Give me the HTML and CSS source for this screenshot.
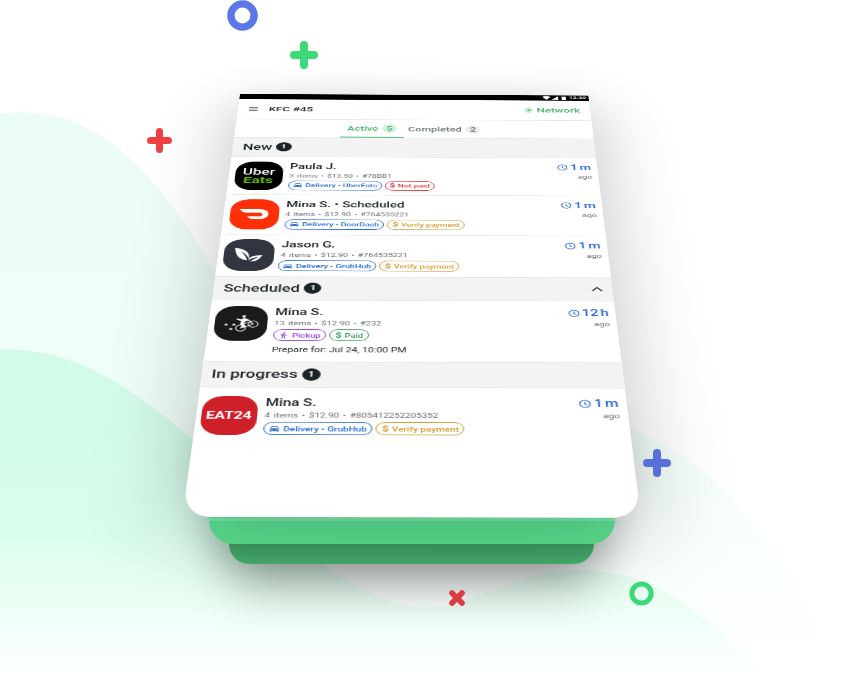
FILE: index.html
```html
<!DOCTYPE html>
<html lang="en">
<head>
<meta charset="utf-8">
<title>Orders</title>
<link rel="stylesheet" href="styles.css">
</head>
<body>
<svg class="defs" width="0" height="0" aria-hidden="true">
  <symbol id="car" viewBox="0 0 24 24"><path fill-rule="evenodd" d="M18.900 6c-.2-.6-.8-1-1.400-1h-11c-.7 0-1.200.4-1.400 1L3 12v8c0 .6.500 1 1 1h1c.6 0 1-.4 1-1v-1h12v1c0 .6.500 1 1 1h1c.6 0 1-.4 1-1v-8l-2.100-6zM6.500 16a1.500 1.500 0 1 1 0-3 1.500 1.500 0 0 1 0 3zm11 0a1.500 1.500 0 1 1 0-3 1.500 1.500 0 0 1 0 3zM5 11l1.500-4.500h11L19 11H5z"/></symbol>
  <symbol id="walk" viewBox="0 0 24 24"><path d="M13.500 5.500c1.100 0 2-.9 2-2s-.9-2-2-2-2 .9-2 2 .9 2 2 2zM9.800 8.900L7 23h2.100l1.800-8 2.100 2v6h2v-7.500l-2.100-2 .6-3C14.800 12 16.800 13 19 13v-2c-1.900 0-3.500-1-4.300-2.400l-1-1.600c-.4-.6-1-1-1.700-1-.3 0-.5.100-.8.100L6 8.300V13h2V9.600l1.800-.7"/></symbol>
  <symbol id="clock" viewBox="0 0 24 24"><g fill="none" stroke="currentColor" stroke-width="2.300"><circle cx="12" cy="12" r="10.500"/><path d="M12 6V13l5 2.500"/></g></symbol>
</svg>
<main class="scene">
  <svg class="backdrop" viewBox="0 0 842 680">
    <defs>
      <linearGradient id="w1" x1="0" y1="110" x2="0" y2="680" gradientUnits="userSpaceOnUse"><stop offset="0" stop-color="#ecfdf5"/><stop offset=".6" stop-color="#f1fef9"/><stop offset="1" stop-color="#fff"/></linearGradient>
      <linearGradient id="fade" x1="560" y1="0" x2="760" y2="0" gradientUnits="userSpaceOnUse"><stop offset="0" stop-color="#fff" stop-opacity="0"/><stop offset="1" stop-color="#fff" stop-opacity=".4"/></linearGradient>
      <linearGradient id="w2" x1="0" y1="349" x2="0" y2="680" gradientUnits="userSpaceOnUse"><stop offset="0" stop-color="#d1fbe8"/><stop offset=".55" stop-color="#dafdec"/><stop offset=".88" stop-color="#f6fffa"/><stop offset="1" stop-color="#fff"/></linearGradient>
    </defs>
    <path fill="url(#w1)" d="M0 113.500Q10 112.500 20 112.500C92 112 148 158 213 268C270 370 320 480 420 490C500 480 540 400 630 428C725 467 785 550 842 680H0Z"/>
    <path fill="url(#fade)" d="M560 380H842V680H560Z"/>
    <path fill="url(#w2)" d="M0 349H5C80 350 135 390 193 440C240 482 280 525 325 565C360 592 395 607 425 607C480 607 510 570 580 570C650 570 705 610 768 680H0Z"/>
  </svg>

  <div class="sheet sheet-back"></div>
  <div class="sheet sheet-front"></div>

  <section class="phone">
    <div class="statusbar">
      <svg width="32" height="9" viewBox="0 0 32 9" fill="#fff"><path d="M0 2Q5-1 10 2L5 8.500ZM19 1V8H11ZM23 1.500h5V8.500H23z"/></svg>
      <span>12:30</span>
    </div>
    <header class="appbar">
      <svg class="menu" width="10" height="9" viewBox="0 0 10 9"><path d="M0 1h10M0 4.500h10M0 8h10" stroke="#50575a" stroke-width="1.400"/></svg>
      <h1>KFC #45</h1>
      <div class="network"><svg width="10" height="13" viewBox="0 0 11 13"><ellipse cx="5.500" cy="6.500" rx="5.500" ry="6.500" fill="#cdeeda"/><circle cx="5.500" cy="6.500" r="2" fill="#3fb56d"/></svg>Network</div>
    </header>
    <nav class="tabs">
      <div class="tab active">Active<span class="count">5</span></div>
      <div class="tab">Completed<span class="count">2</span></div>
    </nav>

    <h2 class="group g-new">New<span class="badge">1</span></h2>
    <div class="list l-new">
      <article class="order">
        <div class="logo uber"><b>Uber</b><b class="lime">Eats</b></div>
        <div class="info">
          <h3>Paula J.</h3>
          <p class="meta">3 items • $13.50 • #78BB1</p>
          <div class="pills"><span class="pill blue"><svg><use href="#car"/></svg>Delivery • UberEats</span><span class="pill red"><i>$</i>Not paid</span></div>
        </div>
        <div class="time"><div><svg><use href="#clock"/></svg>1 m</div><small>ago</small></div>
      </article>
      <article class="order">
        <div class="logo dash"><svg width="34" height="20" viewBox="0 0 36 22"><path fill="#fff" d="M0 1H24C31 1 35 5 35 11S30 21 24 21H17C15 21 13 19.500 11.500 17.500L10 15H24C26.500 15 28 13.500 28 11.500S26.500 8 24 8H9C6 8 4 6.500 2.500 4.500Z"/></svg></div>
        <div class="info">
          <h3>Mina S. • Scheduled</h3>
          <p class="meta">4 items • $12.90 • #764535221</p>
          <div class="pills"><span class="pill blue"><svg><use href="#car"/></svg>Delivery • DoorDash</span><span class="pill amber"><i>$</i>Verify payment</span></div>
        </div>
        <div class="time"><div><svg><use href="#clock"/></svg>1 m</div><small>ago</small></div>
      </article>
      <article class="order">
        <div class="logo grub"><svg width="32" height="26" viewBox="0 0 34 28"><path fill="#fff" d="M1 1C12 3 19 9 18 22C17 17 13 11 8 8C12 13 15 18 16 24C6 23 2 13 1 1ZM17.500 24C18 17 23 15 33 14C30 22 26 27 19 26C22 24 26 20 28 17.500C23 19 20 21 17.500 24Z"/></svg></div>
        <div class="info">
          <h3>Jason G.</h3>
          <p class="meta">4 items • $12.90 • #764535221</p>
          <div class="pills"><span class="pill blue"><svg><use href="#car"/></svg>Delivery • GrubHub</span><span class="pill amber"><i>$</i>Verify payment</span></div>
        </div>
        <div class="time"><div><svg><use href="#clock"/></svg>1 m</div><small>ago</small></div>
      </article>
    </div>

    <h2 class="group g-sched">Scheduled<span class="badge">1</span><svg class="chevron" width="12" height="8" viewBox="0 0 12 8"><path d="M1 7L6 1.500L11 7" fill="none" stroke="#222" stroke-width="1.500"/></svg></h2>
    <div class="list l-sched">
      <article class="order">
        <div class="logo post"><svg width="35" height="27" viewBox="0 0 40 30"><g fill="none" stroke="#fff" stroke-width="1.100"><circle cx="20" cy="23" r="5.500"/><circle cx="34" cy="16" r="5.500"/><path d="M20 23L23 16L30 12L34 16L25 21ZM28 8L34 16"/></g><path fill="#fff" d="M14 6L20 7.500L23 5L27 7L29 10L25 11L23 15L26 20L23 22L19 16L20 11L14 7.500ZM21 .5h3.500v4h-3.500zM3 14.500l.8 1.500h1.700l-1.200 1.300.4 1.700L3 18.200 1.500 19l.3-1.700L.5 16h1.700zM12 14.500l.8 1.500h1.700l-1.200 1.300.4 1.700L12 18.200 10.500 19l.3-1.700L9.500 16h1.700zM9 22.500l.8 1.500h1.700l-1.200 1.300.4 1.700L9 26.200 7.500 27l.3-1.700L6.500 24h1.700z"/></svg></div>
        <div class="info">
          <h3>Mina S.</h3>
          <p class="meta">13 items • $12.90 • #232</p>
          <div class="pills"><span class="pill purple"><svg><use href="#walk"/></svg>Pickup</span><span class="pill green"><i>$</i>Paid</span></div>
          <p class="prepare">Prepare for: Jul 24, 10:00 PM</p>
        </div>
        <div class="time"><div><svg><use href="#clock"/></svg>12 h</div><small>ago</small></div>
      </article>
    </div>

    <h2 class="group g-prog">In progress<span class="badge">1</span></h2>
    <div class="list l-prog">
      <article class="order">
        <div class="logo eat"><b>EAT24</b></div>
        <div class="info">
          <h3>Mina S.</h3>
          <p class="meta">4 items • $12.90 • #805412252205352</p>
          <div class="pills"><span class="pill blue"><svg><use href="#car"/></svg>Delivery • GrubHub</span><span class="pill amber"><i>$</i>Verify payment</span></div>
        </div>
        <div class="time"><div><svg><use href="#clock"/></svg>1 m</div><small>ago</small></div>
      </article>
    </div>
  </section>
  <div class="haze"></div>

  <svg class="confetti" viewBox="0 0 842 680" fill="none" stroke-linecap="round">
    <circle cx="242.500" cy="15.500" r="11.600" stroke="#5c78e8" stroke-width="7.400"/>
    <path d="M294 55h20M304 45v20" stroke="#3adb76" stroke-width="8"/>
    <path d="M150.500 140.500h18M159.500 131.500v18" stroke="#ee4043" stroke-width="7"/>
    <path d="M647 463h20M657 453v20" stroke="#5970dc" stroke-width="8"/>
    <path d="M452 593l10 10M462 593l-10 10" stroke="#d93b3e" stroke-width="5.600"/>
    <circle cx="641.500" cy="593.500" r="9.600" stroke="#3adb76" stroke-width="5"/>
  </svg>
</main>
</body>
</html>
```
FILE: styles.css
```css
* { box-sizing: border-box; }
body { margin: 0; background: #fff; font-family: Roboto, "Liberation Sans", sans-serif; }
h1, h2, h3, p { margin: 0; font-weight: 500; }
svg { display: block; }
.defs { position: absolute; }

.scene { position: relative; width: 842px; height: 680px; overflow: hidden; }
.backdrop, .confetti { position: absolute; left: 0; top: 0; width: 842px; height: 680px; }

/* green sheets stacked under the phone */
.sheet { position: absolute; }
.sheet-back { left: 228.500px; top: 420px; width: 365px; height: 143.500px; border-radius: 0 0 20px 20px; background: linear-gradient(#42a869 86%, #49b573); box-shadow: 0 18px 50px rgba(0,0,0,.38); }
.sheet-front { left: 208.500px; top: 420px; width: 406px; height: 124px; border-radius: 0 0 24px 24px; background: linear-gradient(#5ce496 80%, #5ae28f); box-shadow: 0 10px 40px rgba(0,0,0,.14); }
.haze { position: absolute; left: 209px; top: 517.500px; width: 406px; height: 3px; background: rgba(255,255,255,.14); }

.phone {
  position: absolute; left: 0; top: 0; width: 412px; height: 685px;
  display: flex; flex-direction: column;
  transform-origin: 0 0;
  transform: matrix3d(.848746,.0044291,0,.0000057073, -.148358,.435662,0,-.000351752, 0,0,1,0, 240,94,0,1);
  background: #fff; border-radius: 0 0 25px 25px / 0 0 32px 32px; color: #1b2225;
  box-shadow: 0 20px 90px rgba(0,0,0,.24);
}
.statusbar { height: 10.500px; background: #000; color: #fff; display: flex; justify-content: flex-end; align-items: center; gap: 0; padding-right: 3px; font-size: 8px; line-height: 10px; font-weight: 500; }
.appbar { height: 42px; display: flex; align-items: center; padding: 0 12px 0 13px; border-bottom: 1px solid #e6e6e6; }
.appbar h1 { font-size: 13.500px; margin-left: 13px; }
.network { margin-left: auto; display: flex; align-items: center; gap: 4.500px; color: #42b36c; font-size: 13.500px; font-weight: 500; }
.tabs { height: 37px; display: flex; padding-left: 121px; border-bottom: 1px solid #e6e6e6; }
.tab { display: flex; align-items: center; gap: 4.500px; font-size: 12.500px; font-weight: 500; color: #6c7477; padding: 1px 5px 0; letter-spacing: .1px; }
.tab.active { color: #42b36c; padding: 2px 8px 0 8px; border-bottom: 2px solid #5cc182; }
.count { min-width: 17px; height: 17px; border-radius: 9px; background: #ececec; text-align: center; line-height: 17px; }
.active .count { background: #d5f2e0; }

.group { height: 38.500px; flex: none; display: flex; align-items: center; gap: 4.500px; background: #f3f3f3; border-bottom: 1px solid #e8e8e8; font-size: 16.700px; }
.g-new { padding-left: 11.500px; gap: 4px; }
.g-sched { padding: 0 10px 0 10.500px; border-top: 1px solid #e3e3e3; }
.g-prog { padding-left: 9.500px; border-top: 1px solid #e3e3e3; gap: 4px; }
.badge { width: 18px; height: 18px; border-radius: 50%; background: #1c2427; color: #fff; font-size: 11px; font-weight: 700; line-height: 18px; text-align: center; }
.chevron { margin-left: auto; }

.order { position: relative; display: flex; gap: 7.500px; height: 71.400px; padding: 8.500px 7px 0 6.500px; }
.l-new .order + .order::before { content: ""; position: absolute; left: 6px; right: 6px; top: 0; height: 1px; background: #e4e4e4; }
.l-new .order:last-child { padding-left: 5.500px; }
.l-new .order:last-child .pills { margin-left: -2px; }
.l-sched .order { height: 94px; padding: 9.500px 7px 0 5.500px; }
.l-prog .order { padding: 12px 8px 0 4.500px; }
.logo { flex: none; width: 53px; height: 54px; border-radius: 20px; display: flex; flex-direction: column; align-items: center; justify-content: center; color: #fff; }
.uber { background: #000; font-size: 17px; line-height: 16px; }
.uber b { font-weight: 500; }
.uber .lime { color: #5fb709; font-weight: 700; }
.dash { background: #ff3008; }
.grub { background: #31353f; }
.post { background: #1a1a1a; }
.eat { background: #cf1f29; font-size: 14.800px; }
.info { flex: 1; white-space: nowrap; }
.info h3 { font-size: 14.500px; line-height: 17px; padding-top: 1px; }
.meta { font-size: 9.300px; line-height: 17.500px; font-weight: 400; color: #62696c; word-spacing: 1.300px; }
.pills { display: flex; gap: 3.500px; padding-top: .5px; }
.pill { height: 18px; display: flex; align-items: center; gap: 3px; border: 1px solid currentColor; border-radius: 9px; padding: 0 4px; font-size: 9.400px; font-weight: 500; }
.pill svg { width: 11px; height: 11px; fill: currentColor; }
.pill i { font-style: normal; font-size: 11px; font-weight: 700; }
.blue { color: #2466d6; }
.red { color: #d9363e; }
.amber, .green { padding: 0 4.500px 0 5px; }
.amber { color: #d19a2e; }
.purple { color: #9747dd; }
.green { color: #3c9c5e; }
.prepare { font-size: 10.400px; line-height: 16px; margin-top: 5.500px; font-weight: 400; }
.time { color: #2466d6; text-align: right; font-size: 15px; font-weight: 500; line-height: 17px; padding-top: 1px; word-spacing: -1.800px; }
.time div { display: flex; align-items: center; gap: 2.500px; justify-content: flex-end; }
.time svg { width: 11.500px; height: 12px; }
.time small { display: block; font-size: 9.700px; font-weight: 400; color: #62696c; line-height: 18px; }
```
